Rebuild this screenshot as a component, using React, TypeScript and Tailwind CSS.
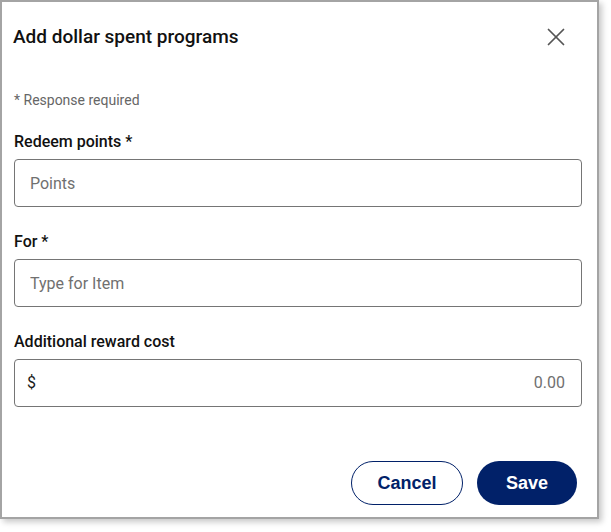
import { X } from 'lucide-react';

const font = { fontFamily: 'Roboto, "Liberation Sans", sans-serif' };

function Field({ label, placeholder }: { label: string; placeholder: string }) {
  return (
    <div className="flex flex-col">
      <label className="text-[16px] leading-6 font-medium text-[#111]">{label}</label>
      <input
        type="text"
        placeholder={placeholder}
        className="mt-[5px] h-12 w-[568px] rounded border border-[#757575] px-[15px] text-[16px] text-[#222] placeholder-[#707070] outline-none"
      />
    </div>
  );
}

export default function App() {
  return (
    <div className="w-[611px] h-[532px] bg-white" style={font}>
      <div className="w-[599px] h-[519px] border-2 border-[#a4a4a4] bg-white shadow-[3px_3px_6px_rgba(0,0,0,0.22)] flex flex-col pl-3">
        <div className="flex items-center justify-between pt-[20px] pr-[26px]">
          <h2 className="text-[19px] leading-6 font-medium text-[#111] -ml-px">Add dollar spent programs</h2>
          <button className="text-[#555]" aria-label="Close">
            <X className="w-[30px] h-[30px]" strokeWidth={1.4} />
          </button>
        </div>

        <p className="mt-[40px] text-[14px] leading-4 text-[#666]">* Response required</p>

        <div className="mt-[22px] flex flex-col gap-[23px]">
          <Field label="Redeem points *" placeholder="Points" />
          <Field label="For *" placeholder="Type for Item" />
          <div className="flex flex-col">
            <label className="text-[16px] leading-6 font-medium text-[#111]">Additional reward cost</label>
            <div className="mt-[5px] h-12 w-[568px] rounded border border-[#757575] flex items-center px-[12px]">
              <span className="text-[16px] text-[#1a1a1a]">$</span>
              <input
                type="text"
                placeholder="0.00"
                className="flex-1 text-right text-[16px] text-[#222] placeholder-[#707070] outline-none pr-[4px]"
              />
            </div>
          </div>
        </div>

        <div className="mt-[54px] flex justify-end gap-[14px] pr-[20px]" style={{ fontFamily: '"Liberation Sans", Arial, sans-serif' }}>
          <button className="w-[112px] h-[44px] rounded-full border border-[#012169] text-[#012169] text-[18px] font-bold">
            Cancel
          </button>
          <button className="w-[100px] h-[44px] rounded-full bg-[#012169] text-white text-[18px] font-bold">
            Save
          </button>
        </div>
      </div>
    </div>
  );
}
